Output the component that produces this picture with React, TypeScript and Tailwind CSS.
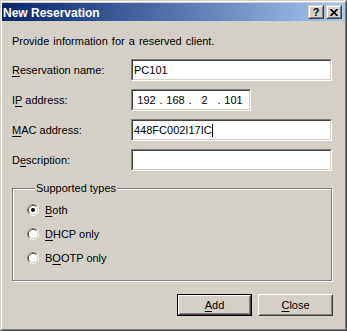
import React from 'react';

const uiFont = { fontFamily: '"Liberation Sans", Arial, sans-serif' };

function Key({ children }: { children: React.ReactNode }) {
  return <span className="underline underline-offset-[2px] decoration-1">{children}</span>;
}

function Sunken({ children, className = '' }: { children?: React.ReactNode; className?: string }) {
  // classic 2px sunken edge of an edit control
  return (
    <div className={`border border-t-[#808080] border-l-[#808080] border-r-white border-b-white ${className}`}>
      <div className="h-full border border-t-[#404040] border-l-[#404040] border-r-[#D4D0C8] border-b-[#D4D0C8] bg-white flex items-center">
        {children}
      </div>
    </div>
  );
}

function Radio({ checked }: { checked?: boolean }) {
  return (
    <svg width="12" height="12" viewBox="0 0 12 12" className="shrink-0">
      <path d="M 2.11 9.89 A 5.5 5.5 0 0 1 9.89 2.11" fill="none" stroke="#808080" />
      <path d="M 9.89 2.11 A 5.5 5.5 0 0 1 2.11 9.89" fill="none" stroke="#ffffff" />
      <path d="M 2.82 9.18 A 4.5 4.5 0 0 1 9.18 2.82" fill="none" stroke="#404040" />
      <path d="M 9.18 2.82 A 4.5 4.5 0 0 1 2.82 9.18" fill="none" stroke="#D4D0C8" />
      <circle cx="6" cy="6" r="4" fill="#ffffff" />
      {checked && <circle cx="6" cy="6" r="2" fill="#000000" />}
    </svg>
  );
}

function CaptionButton({ children }: { children: React.ReactNode }) {
  return (
    <div className="w-[16px] h-[14px] border border-t-[#D4D0C8] border-l-[#D4D0C8] border-r-[#404040] border-b-[#404040]">
      <div className="w-full h-full border border-t-white border-l-white border-r-[#808080] border-b-[#808080] bg-[#D4D0C8] flex items-center justify-center">
        {children}
      </div>
    </div>
  );
}

function PushButton({ children, isDefault }: { children: React.ReactNode; isDefault?: boolean }) {
  const inner = (
    <div className="h-full border border-t-white border-l-white border-r-[#404040] border-b-[#404040]">
      <div className="h-full border border-t-[#D4D0C8] border-l-[#D4D0C8] border-r-[#808080] border-b-[#808080] bg-[#D4D0C8] flex items-center justify-center text-[11px] leading-[15px] text-black">
        {children}
      </div>
    </div>
  );
  return isDefault ? (
    <div className="w-[75px] h-[22px] border border-black">{inner}</div>
  ) : (
    <div className="w-[75px] h-[22px]">{inner}</div>
  );
}

function FieldRow({ label, children }: { label: React.ReactNode; children: React.ReactNode }) {
  return (
    <div className="flex items-center h-[22px]">
      <div className="w-[119px] text-[11px] leading-[15px] text-black">{label}</div>
      {children}
    </div>
  );
}

export default function App() {
  const ip = ['192', '168', '2', '101'];

  return (
    <div className="w-[347px] h-[331px] border border-t-[#D4D0C8] border-l-[#D4D0C8] border-r-[#404040] border-b-[#404040]" style={uiFont}>
      <div className="h-full border border-t-white border-l-white border-r-[#808080] border-b-[#808080] bg-[#D4D0C8] flex flex-col">
        {/* title bar */}
        <div className="h-[18px] mt-[1px] flex items-center justify-between bg-gradient-to-r from-[#0A246A] to-[#A6CAF0] pl-[1px] pr-[3px]">
          <span className="text-white font-bold text-[12px] leading-[18px] pt-[1px]">New Reservation</span>
          <div className="flex gap-[2px]">
            <CaptionButton>
              <span className="text-[11px] leading-[11px] font-bold text-black">?</span>
            </CaptionButton>
            <CaptionButton>
              <svg width="8" height="7" viewBox="0 0 8 7">
                <path d="M0.5 0 L7.5 7 M7.5 0 L0.5 7" stroke="#000" strokeWidth="1.6" />
              </svg>
            </CaptionButton>
          </div>
        </div>

        <div className="pl-[10px] pr-[13px] flex flex-col text-black">
          <p className="mt-[13px] text-[11px] leading-[15px] [word-spacing:1px]">Provide information for a reserved client.</p>

          <div className="mt-[10px] flex flex-col gap-[8px]">
            <FieldRow label={<><Key>R</Key>eservation name:</>}>
              <Sunken className="w-[201px] h-[22px]">
                <span className="pl-[1px] text-[11px] leading-[15px]">PC101</span>
              </Sunken>
            </FieldRow>
            <FieldRow label={<>I<Key>P</Key> address:</>}>
              <Sunken className="w-[120px] h-[22px]">
                <div className="flex pl-[1px] text-[11px] leading-[15px]">
                  {ip.map((part, i) => (
                    <React.Fragment key={i}>
                      <span className="w-[25px] text-center">{part}</span>
                      {i < 3 && <span className="w-[4px] text-center">.</span>}
                    </React.Fragment>
                  ))}
                </div>
              </Sunken>
            </FieldRow>
            <FieldRow label={<><Key>M</Key>AC address:</>}>
              <Sunken className="w-[201px] h-[22px]">
                <span className="pl-[1px] text-[11px] leading-[15px] flex items-center">
                  448FC002I17IC
                  <span className="inline-block w-px h-[13px] bg-black" />
                </span>
              </Sunken>
            </FieldRow>
            <FieldRow label={<>D<Key>e</Key>scription:</>}>
              <Sunken className="w-[201px] h-[22px]" />
            </FieldRow>
          </div>

          <fieldset className="mt-[10px] border border-[#808080] shadow-[inset_1px_1px_0_#ffffff,1px_1px_0_#ffffff] pl-[14px] pt-[6px] pb-[14px] w-[320px]">
            <legend className="ml-[8px] px-[1px] text-[11px] leading-[15px] bg-[#D4D0C8]">Supported types</legend>
            <div className="flex flex-col gap-[8px]">
              <label className="flex items-center gap-[6px] h-[16px] text-[11px] leading-[15px]">
                <Radio checked />
                <span><Key>B</Key>oth</span>
              </label>
              <label className="flex items-center gap-[6px] h-[16px] text-[11px] leading-[15px]">
                <Radio />
                <span><Key>D</Key>HCP only</span>
              </label>
              <label className="flex items-center gap-[6px] h-[16px] text-[11px] leading-[15px]">
                <Radio />
                <span>B<Key>O</Key>OTP only</span>
              </label>
            </div>
          </fieldset>

          <div className="mt-[13px] flex justify-end gap-[6px] -mr-px">
            <PushButton isDefault>
              <span><Key>A</Key>dd</span>
            </PushButton>
            <PushButton>
              <span><Key>C</Key>lose</span>
            </PushButton>
          </div>
        </div>
      </div>
    </div>
  );
}
